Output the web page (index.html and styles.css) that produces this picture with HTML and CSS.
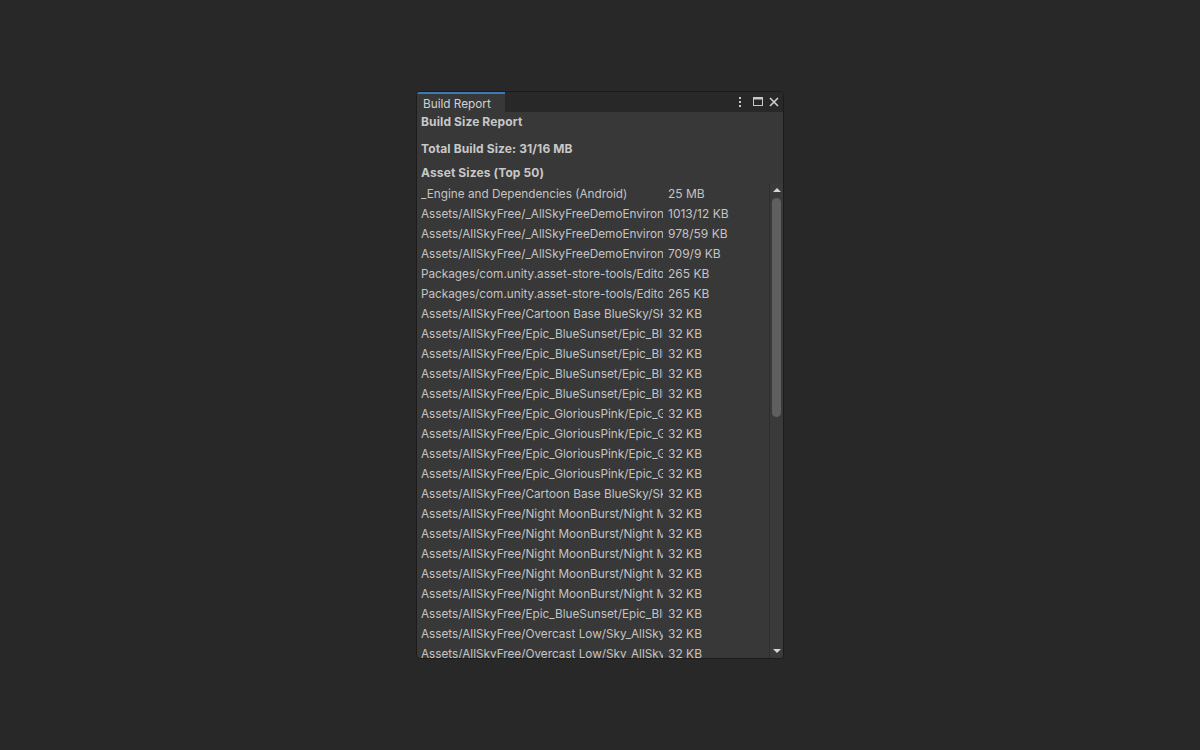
FILE: index.html
```html
<!DOCTYPE html>
<html>
<head>
<meta charset="utf-8">
<link rel="stylesheet" href="styles.css">
</head>
<body>
<div class="stage">
  <div class="window">
    <div class="tabbar">
      <div class="tab">Build Report</div>
      <div class="tab-spacer"></div>
      <div class="tab-icons">
        <svg class="ico kebab" width="6" height="12" viewBox="0 0 6 12"><rect x="2" y="1" width="2" height="2" fill="#c8c8c8"/><rect x="2" y="5" width="2" height="2" fill="#c8c8c8"/><rect x="2" y="9" width="2" height="2" fill="#c8c8c8"/></svg>
        <svg class="ico maxi" width="12" height="12" viewBox="0 0 12 12"><rect x="1.5" y="1.5" width="9" height="8" fill="none" stroke="#c8c8c8" stroke-width="1"/><rect x="1.5" y="1.5" width="9" height="2" fill="#c8c8c8"/></svg>
        <svg class="ico close" width="12" height="12" viewBox="0 0 12 12"><path d="M2 2 L10 10 M10 2 L2 10" stroke="#d0d0d0" stroke-width="1.6" fill="none"/></svg>
      </div>
    </div>
    <div class="content">
      <div class="h h1">Build Size Report</div>
      <div class="h h2">Total Build Size: 31/16 MB</div>
      <div class="h h3">Asset Sizes (Top 50)</div>
      <div class="listwrap">
        <div class="list">
          <div class="row"><span class="name">_Engine and Dependencies (Android)</span><span class="size">25 MB</span></div>
          <div class="row"><span class="name">Assets/AllSkyFree/_AllSkyFreeDemoEnvironment/Terrain/TerrainData.asset</span><span class="size">1013/12 KB</span></div>
          <div class="row"><span class="name">Assets/AllSkyFree/_AllSkyFreeDemoEnvironment/Terrain/Textures/Grass.png</span><span class="size">978/59 KB</span></div>
          <div class="row"><span class="name">Assets/AllSkyFree/_AllSkyFreeDemoEnvironment/Terrain/Textures/Rock.png</span><span class="size">709/9 KB</span></div>
          <div class="row"><span class="name">Packages/com.unity.asset-store-tools/Editor/Icons/icon.png</span><span class="size">265 KB</span></div>
          <div class="row"><span class="name">Packages/com.unity.asset-store-tools/Editor/Icons/logo.png</span><span class="size">265 KB</span></div>
          <div class="row"><span class="name">Assets/AllSkyFree/Cartoon Base BlueSky/Sky_AllSky_Cartoon.png</span><span class="size">32 KB</span></div>
          <div class="row"><span class="name">Assets/AllSkyFree/Epic_BlueSunset/Epic_BlueSunset_Cam_0_Front.png</span><span class="size">32 KB</span></div>
          <div class="row"><span class="name">Assets/AllSkyFree/Epic_BlueSunset/Epic_BlueSunset_Cam_1_Back.png</span><span class="size">32 KB</span></div>
          <div class="row"><span class="name">Assets/AllSkyFree/Epic_BlueSunset/Epic_BlueSunset_Cam_2_Left.png</span><span class="size">32 KB</span></div>
          <div class="row"><span class="name">Assets/AllSkyFree/Epic_BlueSunset/Epic_BlueSunset_Cam_3_Right.png</span><span class="size">32 KB</span></div>
          <div class="row"><span class="name">Assets/AllSkyFree/Epic_GloriousPink/Epic_GloriousPink_Cam_0.png</span><span class="size">32 KB</span></div>
          <div class="row"><span class="name">Assets/AllSkyFree/Epic_GloriousPink/Epic_GloriousPink_Cam_1.png</span><span class="size">32 KB</span></div>
          <div class="row"><span class="name">Assets/AllSkyFree/Epic_GloriousPink/Epic_GloriousPink_Cam_2.png</span><span class="size">32 KB</span></div>
          <div class="row"><span class="name">Assets/AllSkyFree/Epic_GloriousPink/Epic_GloriousPink_Cam_3.png</span><span class="size">32 KB</span></div>
          <div class="row"><span class="name">Assets/AllSkyFree/Cartoon Base BlueSky/Sky_AllSky_Cartoon_2.png</span><span class="size">32 KB</span></div>
          <div class="row"><span class="name">Assets/AllSkyFree/Night MoonBurst/Night Moon Burst_Cam_0.png</span><span class="size">32 KB</span></div>
          <div class="row"><span class="name">Assets/AllSkyFree/Night MoonBurst/Night Moon Burst_Cam_1.png</span><span class="size">32 KB</span></div>
          <div class="row"><span class="name">Assets/AllSkyFree/Night MoonBurst/Night Moon Burst_Cam_2.png</span><span class="size">32 KB</span></div>
          <div class="row"><span class="name">Assets/AllSkyFree/Night MoonBurst/Night Moon Burst_Cam_3.png</span><span class="size">32 KB</span></div>
          <div class="row"><span class="name">Assets/AllSkyFree/Night MoonBurst/Night Moon Burst_Cam_4.png</span><span class="size">32 KB</span></div>
          <div class="row"><span class="name">Assets/AllSkyFree/Epic_BlueSunset/Epic_BlueSunset_Cam_4_Up.png</span><span class="size">32 KB</span></div>
          <div class="row"><span class="name">Assets/AllSkyFree/Overcast Low/Sky_AllSky_Overcast_0.png</span><span class="size">32 KB</span></div>
          <div class="row"><span class="name">Assets/AllSkyFree/Overcast Low/Sky_AllSky_Overcast_1.png</span><span class="size">32 KB</span></div>
          <div class="row"><span class="name">Assets/AllSkyFree/Overcast Low/Sky_AllSky_Overcast_2.png</span><span class="size">32 KB</span></div>
        </div>
        <div class="scrollbar">
          <div class="arrow up"></div>
          <div class="track"><div class="thumb"></div></div>
          <div class="arrow down"></div>
        </div>
      </div>
    </div>
  </div>
</div>
</body>
</html>
```

FILE: styles.css
```css
* { box-sizing: border-box; }
html, body { margin: 0; padding: 0; }
body {
  background: #282828;
  width: 1200px;
  height: 750px;
  font-family: Inter, "Noto Sans", sans-serif;
  font-size: 11.75px;
  color: #c4c4c4;
  overflow: hidden;
}
.stage {
  display: flex;
  padding-top: 91px;
  padding-left: 416px;
}
.window {
  width: 368px;
  height: 568px;
  border: 1px solid #1c1c1c;
  border-radius: 4px;
  background: #383838;
  display: flex;
  flex-direction: column;
  overflow: hidden;
}
.tabbar {
  height: 20px;
  background: #282828;
  display: flex;
  align-items: stretch;
  flex: none;
}
.tab {
  width: 88px;
  background: #383838;
  border-top: 2px solid #3a79bb;
  padding-left: 6px;
  padding-top: 1px;
  line-height: 18px;
  color: #d2d2d2;
}
.tab-spacer { flex: 1; }
.tab-icons {
  display: flex;
  align-items: center;
  padding-right: 3px;
}
.ico { display: block; }
.kebab { margin-right: 9px; }
.maxi { margin-right: 4px; }
.content {
  flex: 1;
  display: flex;
  flex-direction: column;
  min-height: 0;
  padding-left: 4px;
  padding-top: 1px;
}
.h {
  font-weight: 700;
  font-size: 12px;
  letter-spacing: 0.12px;
  line-height: 18px;
  color: #c8c8c8;
}
.h2 { margin-top: 9px; }
.h3 { margin-top: 6px; }
.listwrap {
  flex: 1;
  display: flex;
  min-height: 0;
  margin-top: 2px;
}
.list {
  flex: 1;
  overflow: hidden;
}
.row {
  height: 20px;
  line-height: 20px;
  display: flex;
  white-space: nowrap;
}
.name {
  width: 242px;
  overflow: hidden;
  margin-right: 5px;
  flex: none;
}
.size {
  flex: none;
  font-size: 12px;
}
.scrollbar {
  width: 14px;
  flex: none;
  display: flex;
  flex-direction: column;
  align-items: center;
  border-left: 1px solid #2e2e2e;
  background: #3a3a3a;
}
.arrow {
  width: 0;
  height: 0;
  border-left: 4px solid transparent;
  border-right: 4px solid transparent;
  flex: none;
}
.arrow.up {
  margin-top: 4px;
  border-bottom: 4px solid #d6d6d6;
}
.arrow.down {
  border-top: 4px solid #d6d6d6;
  margin-bottom: 5px;
}
.track {
  flex: 1;
  width: 100%;
  padding: 6px 2px 0 2px;
}
.thumb {
  width: 9px;
  height: 219px;
  background: #5f5f5f;
  border-radius: 5px;
}
```
